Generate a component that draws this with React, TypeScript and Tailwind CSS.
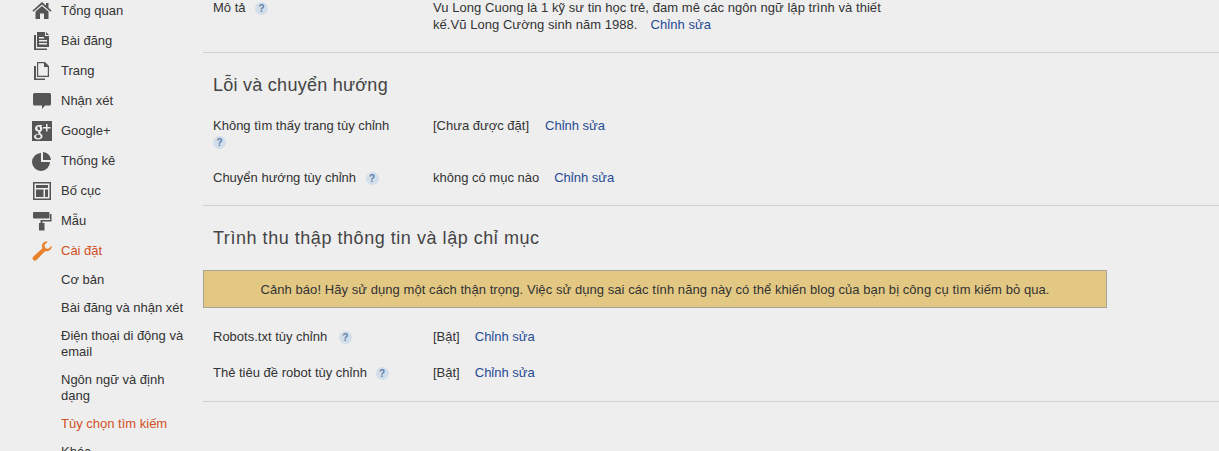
const iconClass = "block w-[20px] h-[20px] fill-[#555555]";

function HomeIcon() {
  return (
    <svg viewBox="0 0 20 20" className={iconClass}>
      <path d="M10 1 L14 4.6 V2 H16.5 V6.8 L19.5 9.6 L18.6 10.7 L10 3.4 L1.4 10.7 L0.5 9.6 Z" />
      <path d="M3.5 10.5 L10 5 L16.5 10.5 V18 H12 V12.5 H8 V18 H3.5 Z" />
    </svg>
  );
}

function PostsIcon() {
  return (
    <svg viewBox="0 0 20 20" className={iconClass}>
      <path d="M2 4 H4 V17.5 H15 V19 H2 Z" />
      <path fillRule="evenodd" d="M5 1 H13 V5 H17 V16 H5 Z M7 6 V7.5 H12 V6 Z M7 9 V10.5 H15 V9 Z M7 12 V13.5 H15 V12 Z" />
      <path d="M14 1 L17 4 H14 Z" />
    </svg>
  );
}

function PagesIcon() {
  return (
    <svg viewBox="0 0 20 20" className={iconClass}>
      <path d="M2 5 H4 V17.5 H13 V19 H2 Z" />
      <path fillRule="evenodd" d="M5 1 H13 L17 5 V16 H5 Z M6.2 2.2 V14.8 H15.8 V6 H12 V2.2 Z" />
    </svg>
  );
}

function CommentIcon() {
  return (
    <svg viewBox="0 0 20 20" className={iconClass}>
      <path d="M2.5 2 H17.5 Q19 2 19 3.5 V13 Q19 14.5 17.5 14.5 H13 L10 18 V14.5 H2.5 Q1 14.5 1 13 V3.5 Q1 2 2.5 2 Z" />
    </svg>
  );
}

function GooglePlusIcon() {
  return (
    <svg viewBox="0 0 20 20" className="block w-[20px] h-[20px]">
      <rect width="20" height="20" fill="#555555" />
      <path d="M7 4 C4.5 4 3 5.5 3 7.4 C3 9.3 4.5 10.4 6.3 10.4 L6 11.6 L6.8 12.7 C4 12.8 2 14 2 15.8 C2 17.6 4 18.4 6.2 18.4 C8.8 18.4 10.6 17 10.6 15.2 C10.6 13.8 9.6 13.1 8.7 12.4 C8 11.8 8 11.3 8.8 10.7 C9.7 10 10.3 9 10.3 7.6 C10.3 6.6 9.9 5.8 9.3 5.2 L10.6 4 Z" fill="#eeeeee" />
      <path d="M6.7 5.4 C5.5 5.4 5.2 6.4 5.5 7.6 C5.8 8.8 6.4 9.3 7.1 9.2 C8 9.1 8.2 8.1 7.9 7 C7.6 6 7.2 5.4 6.7 5.4 Z M6.4 13.6 C5 13.6 4 14.4 4 15.5 C4 16.6 5 17.2 6.3 17.2 C7.7 17.2 8.6 16.5 8.6 15.5 C8.6 14.5 7.7 13.6 6.4 13.6 Z" fill="#555555" />
      <path d="M14 3 H15.5 V6 H18.5 V7.5 H15.5 V10.5 H14 V7.5 H11 V6 H14 Z" fill="#eeeeee" />
    </svg>
  );
}

function PieIcon() {
  return (
    <svg viewBox="0 0 20 20" className={iconClass}>
      <path d="M9 2 V11 H18 A9 9 0 1 1 9 2 Z" />
      <path d="M11 1 A8.5 8.5 0 0 1 19 9 H11 Z" />
    </svg>
  );
}

function LayoutIcon() {
  return (
    <svg viewBox="0 0 20 20" className={iconClass}>
      <path fillRule="evenodd" d="M1 1 H19 V19 H1 Z M2.5 2.5 V17.5 H17.5 V2.5 Z" />
      <path d="M4 4 H16 V7 H4 Z M4 8.5 H11.5 V16 H4 Z M13 8.5 H16 V16 H13 Z" />
    </svg>
  );
}

function RollerIcon() {
  return (
    <svg viewBox="0 0 20 20" className={iconClass}>
      <path d="M2 1 H16.5 Q17.5 1 17.5 2 V6.5 Q17.5 7.5 16.5 7.5 H2 Q1 7.5 1 6.5 V2 Q1 1 2 1 Z" />
      <path d="M18 3 H19.5 V10.5 H10.5 V12 H8.5 V9 H18 Z" />
      <path d="M7 12 H12.5 V19.5 H7 Z" />
    </svg>
  );
}

function WrenchIcon() {
  return (
    <svg viewBox="0 0 20 20" className="block w-[20px] h-[20px] fill-[#e8802c]">
      <path d="M19.5 4.8 L16.2 8 L13.2 7 L12.4 3.9 L15.7 0.7 C12.8 -0.1 9.8 2.2 10 5.4 C10 6.1 10.1 6.7 10.4 7.2 L1.4 15.6 C0.3 16.7 0.4 18.2 1.3 19 C2.2 19.9 3.6 19.9 4.6 18.9 L13 10.2 C16.5 11.1 20.4 8.3 19.5 4.8 Z" />
    </svg>
  );
}

const navItems = [
  { label: "Tổng quan", icon: <HomeIcon /> },
  { label: "Bài đăng", icon: <PostsIcon /> },
  { label: "Trang", icon: <PagesIcon /> },
  { label: "Nhận xét", icon: <CommentIcon /> },
  { label: "Google+", icon: <GooglePlusIcon /> },
  { label: "Thống kê", icon: <PieIcon /> },
  { label: "Bố cục", icon: <LayoutIcon /> },
  { label: "Mẫu", icon: <RollerIcon /> },
  { label: "Cài đặt", icon: <WrenchIcon />, active: true },
];

const subItems = [
  { label: "Cơ bản" },
  { label: "Bài đăng và nhận xét" },
  { label: "Điện thoại di động và email" },
  { label: "Ngôn ngữ và định dạng" },
  { label: "Tùy chọn tìm kiếm", active: true },
  { label: "Khác" },
];

function Help() {
  return (
    <span className="inline-flex w-[13px] h-[13px] rounded-full bg-[#d3deeb] items-center justify-center align-middle text-[10px] leading-none font-bold text-[#5f7da6]">
      ?
    </span>
  );
}

function EditLink() {
  return <a className="text-[#1f4a94] ml-[15px]">Chỉnh sửa</a>;
}

function Row({ label, children }: { label: React.ReactNode; children: React.ReactNode }) {
  return (
    <div className="flex">
      <div className="w-[220px] shrink-0 pr-[30px]">{label}</div>
      <div>{children}</div>
    </div>
  );
}

export default function App() {
  return (
    <div
      className="flex h-[451px] overflow-hidden bg-[#eeeeee] text-[13px] leading-[16px] text-[#333333]"
      style={{ fontFamily: '"Liberation Sans", Arial, sans-serif' }}
    >
      <aside className="w-[203px] shrink-0 -mt-[4px]">
        {navItems.map((item) => (
          <div key={item.label} className="flex items-center h-[30px] pl-[32px]">
            <span className="w-[29px] shrink-0">{item.icon}</span>
            <span className={item.active ? "text-[#d1501f]" : ""}>{item.label}</span>
          </div>
        ))}
        <ul className="pl-[61px] w-[188px] pt-[6px] flex flex-col gap-[12px]">
          {subItems.map((item) => (
            <li key={item.label} className={item.active ? "text-[#d1501f]" : ""}>
              {item.label}
            </li>
          ))}
        </ul>
      </aside>

      <main className="flex-1 -mt-[1px]">
        <section className="pl-[10px] pb-[19px] border-b border-[#d0d0d0]">
          <div className="flex leading-[17px]">
            <div className="w-[220px] shrink-0">
              Mô tả <span className="ml-[6px]"><Help /></span>
            </div>
            <div className="w-[460px] tracking-[0.05px]">
              Vu Long Cuong là 1 kỹ sư tin học trẻ, đam mê các ngôn ngữ lập trình và thiết kế.Vũ Long Cường sinh năm 1988.
              <a className="text-[#1f4a94] ml-[13px]">Chỉnh sửa</a>
            </div>
          </div>
        </section>

        <section className="pl-[10px] pt-[20px] pb-[19px] border-b border-[#d0d0d0] flex flex-col gap-[20px]">
          <h2 className="text-[18px] leading-[24px] tracking-[0.26px] text-[#444444] mb-[1px]">Lỗi và chuyển hướng</h2>
          <Row label={<>Không tìm thấy trang tùy chỉnh <Help /></>}>
            [Chưa được đặt]
            <a className="text-[#1f4a94] ml-[16px]">Chỉnh sửa</a>
          </Row>
          <Row label={<>Chuyển hướng tùy chỉnh <span className="ml-[6px]"><Help /></span></>}>
            không có mục nào
            <EditLink />
          </Row>
        </section>

        <section className="pt-[20px] pb-[20px] border-b border-[#d0d0d0] flex flex-col gap-[20px]">
          <h2 className="pl-[10px] text-[18px] leading-[24px] tracking-[0.54px] text-[#444444]">
            Trình thu thập thông tin và lập chỉ mục
          </h2>
          <div className="w-[904px] h-[38px] mb-[1px] pt-[1px] flex items-center justify-center tracking-[0.06px] bg-[#e3c884] border border-[#a8a494]">
            Cảnh báo! Hãy sử dụng một cách thận trọng. Việc sử dụng sai các tính năng này có thể khiến blog của bạn bị công cụ tìm kiếm bỏ qua.
          </div>
          <div className="pl-[10px] flex flex-col gap-[20px]">
            <Row label={<>Robots.txt tùy chỉnh <span className="ml-[8px]"><Help /></span></>}>
              [Bật]
              <EditLink />
            </Row>
            <Row label={<>Thẻ tiêu đề robot tùy chỉnh <span className="ml-[5px]"><Help /></span></>}>
              [Bật]
              <EditLink />
            </Row>
          </div>
        </section>
      </main>
    </div>
  );
}
